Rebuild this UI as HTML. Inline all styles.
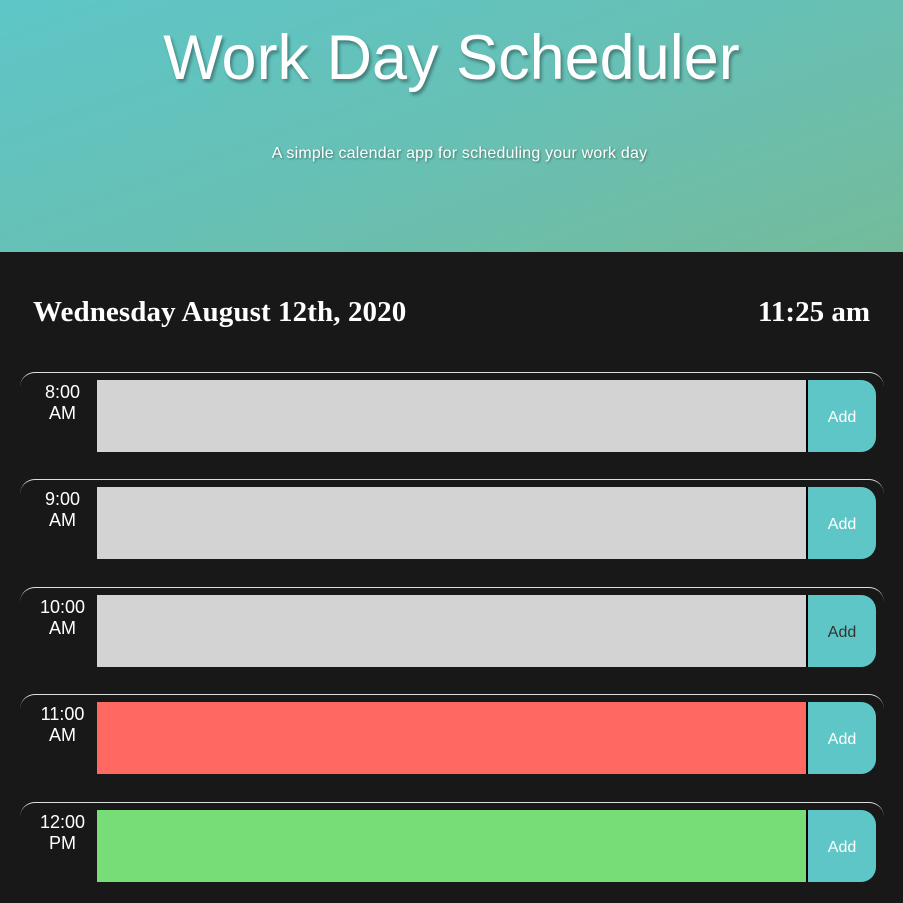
<!DOCTYPE html>
<html><head><style>
*{margin:0;padding:0;box-sizing:border-box}
body{width:903px;height:903px;overflow:hidden;background:#181818;font-family:"Liberation Sans",sans-serif}
header{height:252px;background:linear-gradient(160deg,#5ec6c7 0%,#67c0b5 50%,#74bb9b 100%);text-align:center;color:#fff;position:relative}
h1{position:absolute;top:22px;left:0;right:0;font-weight:300;font-size:63px;letter-spacing:0;text-shadow:2px 3px 3px rgba(0,0,0,.35)}
.sub{position:absolute;top:145px;left:16px;right:0;font-size:16px;letter-spacing:0.2px;text-shadow:1px 1px 2px rgba(0,0,0,.4)}
.date{position:absolute;top:296px;left:33px;color:#fff;font-family:"Liberation Serif",serif;font-size:29px;font-weight:bold;letter-spacing:0.1px}
.time{position:absolute;top:296px;right:33px;color:#fff;font-family:"Liberation Serif",serif;font-size:29px;font-weight:bold}
.row{position:absolute;left:20px;width:864px;height:90px;border-top:1px solid #ddd;border-radius:15px 15px 0 0}
.hr{position:absolute;left:4px;width:77px;top:9px;text-align:center;color:#fff;font-size:18px;line-height:21px}
.ta{position:absolute;left:77px;top:7px;width:709px;height:72px;background:#d3d3d3}
.btn{position:absolute;left:786px;top:7px;width:70px;height:72px;padding-top:3px;background:#5ec6c7;border-left:2px solid #000;border-radius:0 15px 15px 0;color:#fff;font-size:16px;display:flex;align-items:center;justify-content:center}
</style></head><body>
<header><h1>Work Day Scheduler</h1><div class="sub">A simple calendar app for scheduling your work day</div></header>
<div class="date">Wednesday August 12th, 2020</div><div class="time">11:25 am</div>
<div class="row" style="top:372px"><div class="hr">8:00<br>AM</div><div class="ta"></div><div class="btn">Add</div></div>
<div class="row" style="top:479px"><div class="hr">9:00<br>AM</div><div class="ta"></div><div class="btn">Add</div></div>
<div class="row" style="top:587px"><div class="hr">10:00<br>AM</div><div class="ta"></div><div class="btn" style="color:#333">Add</div></div>
<div class="row" style="top:694px"><div class="hr">11:00<br>AM</div><div class="ta" style="background:#ff6961"></div><div class="btn">Add</div></div>
<div class="row" style="top:802px"><div class="hr">12:00<br>PM</div><div class="ta" style="background:#77dd77"></div><div class="btn">Add</div></div>
</body></html>
